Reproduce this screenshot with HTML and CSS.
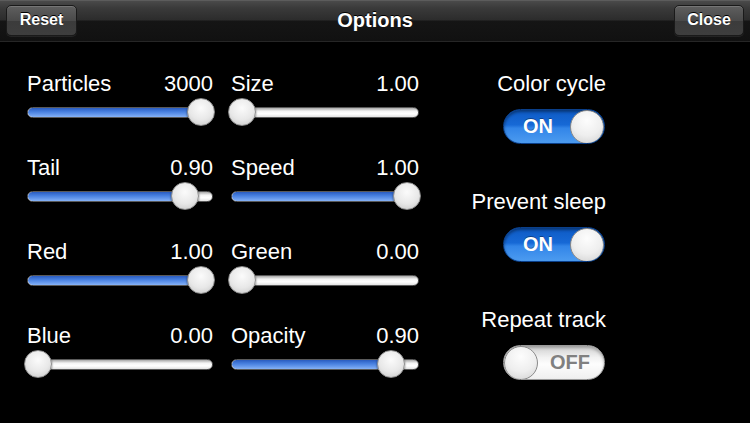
FILE: index.html
```html
<!DOCTYPE html>
<html>
<head>
<meta charset="utf-8">
<link rel="stylesheet" href="styles.css">
</head>
<body>
<header class="navbar">
  <div class="nav-left"><button class="nav-btn">Reset</button></div>
  <h1 class="nav-title">Options</h1>
  <div class="nav-right"><button class="nav-btn">Close</button></div>
</header>
<main class="content">
  <section class="sliders">
    <div class="slider-item">
      <div class="slider-head"><span>Particles</span><span>3000</span></div>
      <div class="slider" style="--v:1"><div class="track"><div class="fill"></div></div><div class="thumb"></div></div>
    </div>
    <div class="slider-item">
      <div class="slider-head"><span>Size</span><span>1.00</span></div>
      <div class="slider" style="--v:0"><div class="track"><div class="fill"></div></div><div class="thumb"></div></div>
    </div>
    <div class="slider-item">
      <div class="slider-head"><span>Tail</span><span>0.90</span></div>
      <div class="slider" style="--v:0.9"><div class="track"><div class="fill"></div></div><div class="thumb"></div></div>
    </div>
    <div class="slider-item">
      <div class="slider-head"><span>Speed</span><span>1.00</span></div>
      <div class="slider" style="--v:1"><div class="track"><div class="fill"></div></div><div class="thumb"></div></div>
    </div>
    <div class="slider-item">
      <div class="slider-head"><span>Red</span><span>1.00</span></div>
      <div class="slider" style="--v:1"><div class="track"><div class="fill"></div></div><div class="thumb"></div></div>
    </div>
    <div class="slider-item">
      <div class="slider-head"><span>Green</span><span>0.00</span></div>
      <div class="slider" style="--v:0"><div class="track"><div class="fill"></div></div><div class="thumb"></div></div>
    </div>
    <div class="slider-item">
      <div class="slider-head"><span>Blue</span><span>0.00</span></div>
      <div class="slider" style="--v:0"><div class="track"><div class="fill"></div></div><div class="thumb"></div></div>
    </div>
    <div class="slider-item">
      <div class="slider-head"><span>Opacity</span><span>0.90</span></div>
      <div class="slider" style="--v:0.9"><div class="track"><div class="fill"></div></div><div class="thumb"></div></div>
    </div>
  </section>
  <section class="switches">
    <div class="switch-item">
      <div class="switch-label">Color cycle</div>
      <div class="toggle on"><span class="toggle-text">ON</span><span class="knob"></span></div>
    </div>
    <div class="switch-item">
      <div class="switch-label">Prevent sleep</div>
      <div class="toggle on"><span class="toggle-text">ON</span><span class="knob"></span></div>
    </div>
    <div class="switch-item">
      <div class="switch-label">Repeat track</div>
      <div class="toggle off"><span class="knob"></span><span class="toggle-text">OFF</span></div>
    </div>
  </section>
</main>
</body>
</html>
```

FILE: styles.css
```css
* { box-sizing: border-box; }
html, body {
  margin: 0;
  padding: 0;
  background: #000;
  color: #fff;
  font-family: "Liberation Sans", Arial, sans-serif;
  width: 750px;
  height: 423px;
  overflow: hidden;
}

.navbar {
  height: 42px;
  display: grid;
  grid-template-columns: 1fr auto 1fr;
  align-items: center;
  padding: 0 6px 1px;
  border-bottom: 1px solid #262626;
  background: linear-gradient(to bottom, #6e6e6e 0px, #4a4a4a 1px, #3a3a3a 8px, #2c2c2c 20px, #151515 21px, #111 41px);
}
.nav-right { display: flex; justify-content: flex-end; }
.nav-title {
  margin: 0;
  font-size: 20px;
  font-weight: bold;
  line-height: 24px;
  text-shadow: 0 -1px 0 #000;
}
.nav-btn {
  height: 31px;
  padding: 0 12px;
  border: 1px solid #1a1a1a;
  border-radius: 5px;
  background: linear-gradient(to bottom, #5f5f5f 0%, #4a4a4a 50%, #3b3b3b 51%, #3e3e3e 100%);
  box-shadow: inset 0 1px 0 rgba(255,255,255,0.15), 0 1px 0 rgba(255,255,255,0.08);
  color: #fff;
  font-family: "Liberation Sans", Arial, sans-serif;
  font-size: 16px;
  font-weight: bold;
  text-shadow: 0 -1px 0 #000;
}
.nav-left .nav-btn { width: 71px; }
.nav-right .nav-btn { width: 70px; }

.content {
  display: flex;
  padding: 30px 145px 0 27px;
}
.sliders {
  display: grid;
  grid-template-columns: 186px 188px;
  grid-auto-rows: 84px;
  column-gap: 18px;
}
.slider-head {
  display: flex;
  justify-content: space-between;
  font-size: 22px;
  line-height: 24px;
}
.slider {
  position: relative;
  height: 28px;
  margin-top: 2px;
  display: flex;
  align-items: center;
}
.track {
  flex: 1;
  height: 11px;
  border-radius: 6px;
  border: 1px solid #5a5a5a;
  background: linear-gradient(to bottom, #a8a8a8 0%, #f4f4f4 35%, #ffffff 65%, #e2e2e2 100%);
  overflow: hidden;
}
.fill {
  height: 100%;
  width: calc(11px + var(--v) * (100% - 23px));
  border-radius: 6px 0 0 6px;
  background: linear-gradient(to bottom, #2a5cc0 0%, #477fdf 40%, #6497ec 70%, #86b2f6 100%);
}
.thumb {
  position: absolute;
  top: 0;
  left: calc(var(--v) * (100% - 23px) - 3px);
  width: 28px;
  height: 28px;
  border-radius: 50%;
  border: 1px solid #8e8e8e;
  background: radial-gradient(circle at 50% 35%, #fbfbfb 0%, #e8e8e8 55%, #c4c4c4 100%);
  box-shadow: 0 1px 2px rgba(0,0,0,0.6);
}

.switches {
  flex: 1;
  display: flex;
  flex-direction: column;
  align-items: flex-end;
  gap: 46px;
}
.switch-item {
  display: flex;
  flex-direction: column;
  align-items: flex-end;
}
.switch-label {
  font-size: 22px;
  line-height: 24px;
  margin-right: -1px;
}
.toggle {
  margin-top: 13px;
  width: 102px;
  height: 35px;
  border-radius: 18px;
  display: flex;
  align-items: center;
  overflow: hidden;
  font-size: 20px;
  font-weight: bold;
}
.toggle.on {
  background: linear-gradient(to bottom, #0d5ac4 0%, #1769d6 45%, #3285e8 55%, #4c9bf0 100%);
  box-shadow: inset 0 2px 3px rgba(0,0,0,0.4);
  border: 1px solid #0a3f8a;
}
.toggle.off {
  background: linear-gradient(to bottom, #cfcfcf 0%, #f2f2f2 35%, #fdfdfd 55%, #efefef 100%);
  box-shadow: inset 0 2px 3px rgba(0,0,0,0.25);
  border: 1px solid #9a9a9a;
}
.toggle-text {
  flex: 1;
  text-align: center;
}
.toggle.on .toggle-text { color: #fff; text-shadow: 0 -1px 0 rgba(0,0,0,0.35); padding-left: 2px; }
.toggle.off .toggle-text { color: #808080; padding-right: 2px; }
.knob {
  width: 34px;
  height: 34px;
  flex: none;
  border-radius: 50%;
  border: 1px solid #8a8a8a;
  background: radial-gradient(circle at 50% 30%, #fdfdfd 0%, #eeeeee 55%, #cfcfcf 100%);
}
```
